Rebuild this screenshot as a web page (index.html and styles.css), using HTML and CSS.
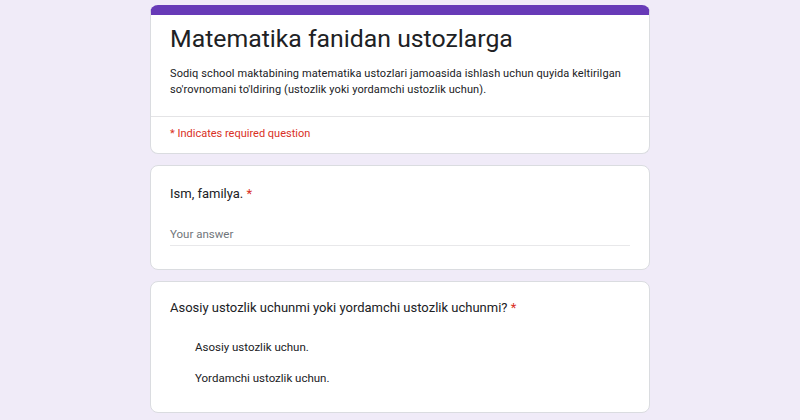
FILE: index.html
```html
<!DOCTYPE html>
<html lang="uz">
<head>
<meta charset="utf-8">
<title>Matematika fanidan ustozlarga</title>
<link rel="stylesheet" href="styles.css">
</head>
<body>
<main class="form">
  <section class="card header-card">
    <div class="header-main">
      <h1 class="title">Matematika fanidan ustozlarga</h1>
      <p class="desc">Sodiq school maktabining matematika ustozlari jamoasida ishlash uchun quyida keltirilgan<br>so'rovnomani to'ldiring (ustozlik yoki yordamchi ustozlik uchun).</p>
    </div>
    <div class="header-note"><span class="req">* Indicates required question</span></div>
  </section>

  <section class="card question">
    <div class="q-title">Ism, familya. <span class="star">*</span></div>
    <div class="answer">Your answer</div>
  </section>

  <section class="card question q3">
    <div class="q-title">Asosiy ustozlik uchunmi yoki yordamchi ustozlik uchunmi? <span class="star">*</span></div>
    <div class="options">
      <div class="option">Asosiy ustozlik uchun.</div>
      <div class="option">Yordamchi ustozlik uchun.</div>
    </div>
  </section>
</main>
</body>
</html>
```

FILE: styles.css
```css
* { box-sizing: border-box; }
html, body { margin: 0; padding: 0; }
body {
  background: #f0ebf8;
  font-family: Roboto, "Liberation Sans", Arial, sans-serif;
  color: #202124;
  height: 420px;
  overflow: hidden;
}
.form {
  width: 500px;
  margin: 5px auto 0;
  display: flex;
  flex-direction: column;
  gap: 11px;
}
.card {
  background: #fff;
  border: 1px solid #dadce0;
  border-radius: 8px;
}
.header-card {
  border-top: 10px solid #673ab7;
}
.header-main {
  padding: 8px 19px 18px;
  border-bottom: 1px solid #e4e4e6;
}
.title {
  margin: 0;
  font-size: 24.8px;
  line-height: 32px;
  font-weight: 400;
  color: #202124;
}
.desc {
  margin: 11px 0 0;
  font-size: 11px;
  line-height: 16px;
  letter-spacing: 0.1px;
  white-space: nowrap;
  color: #202124;
}
.header-note {
  padding: 9px 19px 11px;
  font-size: 11px;
  line-height: 16px;
}
.req { color: #d93025; }
.question {
  padding: 18px 19px 23px;
}
.q-title {
  font-size: 13px;
  line-height: 20px;
  color: #202124;
}
.star { color: #d93025; }
.answer {
  margin-top: 22px;
  font-size: 11.5px;
  line-height: 16px;
  color: #70757a;
  padding-bottom: 3px;
  border-bottom: 1px solid #e8e8ea;
}
.q3 { padding: 16px 19px 26px; }
.options {
  margin-top: 21px;
  padding-left: 25px;
  display: flex;
  flex-direction: column;
  gap: 15px;
}
.option {
  font-size: 11.5px;
  line-height: 16px;
  color: #202124;
}
```
